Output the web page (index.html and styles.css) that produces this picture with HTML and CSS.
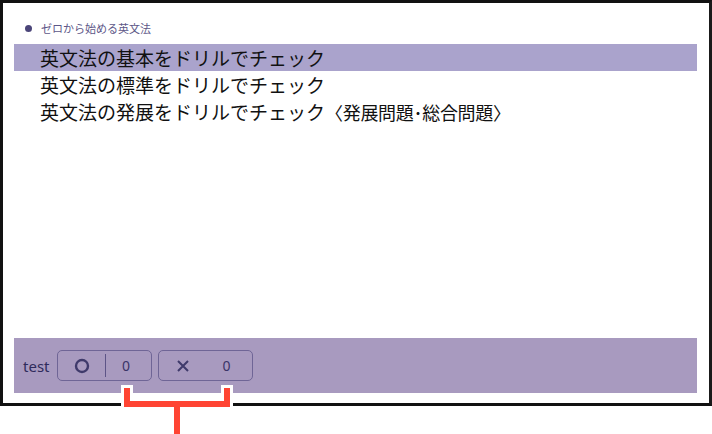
FILE: index.html
```html
<!DOCTYPE html>
<html lang="ja">
<head>
    <meta charset="UTF-8">
    <meta name="viewport" content="width=device-width, initial-scale=1.0">
    <title>ゼロから始める英文法</title>
    <link rel="stylesheet" href="styles.css">
</head>
<body>
    <div class="screen">
        <div class="crumb">
            <span class="crumb-dot"></span>
            <span>ゼロから始める英文法</span>
        </div>
        <ul class="menu">
            <li class="menu-item active">英文法の基本をドリルでチェック</li>
            <li class="menu-item">英文法の標準をドリルでチェック</li>
            <li class="menu-item">英文法の発展をドリルでチェック<span class="menu-sub">〈発展問題･総合問題〉</span></li>
        </ul>
        <div class="score-bar">
            <span class="score-label">test</span>
            <div class="score-box">
                <span class="score-icon">
                    <svg width="16" height="16" viewBox="0 0 16 16">
                        <circle cx="8" cy="8" r="6" fill="none" stroke="#3f3a6b" stroke-width="2.4"/>
                    </svg>
                </span>
                <span class="score-divider"></span>
                <span class="score-num">0</span>
            </div>
            <div class="score-box">
                <span class="score-icon">
                    <svg width="16" height="16" viewBox="0 0 16 16">
                        <path d="M3 3 L13 13 M13 3 L3 13" stroke="#3f3a6b" stroke-width="2" fill="none"/>
                    </svg>
                </span>
                <span class="score-num">0</span>
            </div>
        </div>
    </div>

    <!-- 注釈の括弧 -->
    <svg class="callout" width="125" height="54" viewBox="0 0 125 54">
        <path d="M12 11 V24 H112 V11 M62 24 V60" fill="none" stroke="#fff" stroke-width="12" stroke-linecap="square"/>
        <path d="M12 11 V24 H112 V11 M62 24 V60" fill="none" stroke="#ff4433" stroke-width="6" stroke-linecap="square"/>
    </svg>
</body>
</html>
```

FILE: styles.css
```css
* {
    margin: 0;
    padding: 0;
    box-sizing: border-box;
}

body {
    font-family: "Noto Sans CJK JP", "Noto Sans", sans-serif;
    background: #fff;
    width: 712px;
    height: 434px;
    position: relative;
    overflow: hidden;
}

.screen {
    width: 712px;
    height: 406px;
    border: 3px solid #111;
    border-right-color: #1a1a1a;
    display: flex;
    flex-direction: column;
    padding: 18px 12px 10px 11px;
}

.crumb {
    display: flex;
    align-items: center;
    gap: 9px;
    height: 14px;
    padding-left: 11px;
    font-size: 11px;
    color: #5d5788;
    margin-bottom: 9px;
}

.crumb-dot {
    width: 7px;
    height: 7px;
    border-radius: 50%;
    background: #4b4579;
}

.menu {
    list-style: none;
    flex: 1;
}

.menu-item {
    height: 27px;
    line-height: 27px;
    padding-left: 26px;
    font-size: 19px;
    color: #111;
    white-space: nowrap;
}

.menu-item.active {
    background: #aaa3cc;
}

.menu-sub {
    font-size: 18px;
    letter-spacing: -0.3px;
}

.score-bar {
    height: 55px;
    background: #a89abf;
    display: flex;
    align-items: center;
    padding-left: 9px;
    gap: 6px;
}

.score-label {
    width: 28px;
    font-family: "Noto Sans", sans-serif;
    font-size: 15px;
    color: #2f2b5c;
}

.score-box {
    width: 95px;
    height: 31px;
    border: 1px solid #6f6596;
    border-radius: 5px;
    display: flex;
    align-items: center;
}

.score-icon {
    width: 47px;
    display: flex;
    justify-content: center;
}

.score-divider {
    width: 1px;
    height: 23px;
    background: #5d5487;
}

.score-num {
    flex: 1;
    text-align: center;
    padding-right: 5px;
    font-family: "Noto Sans", sans-serif;
    font-size: 14px;
    color: #3a3468;
}

.callout {
    position: absolute;
    left: 115px;
    top: 380px;
}
```
